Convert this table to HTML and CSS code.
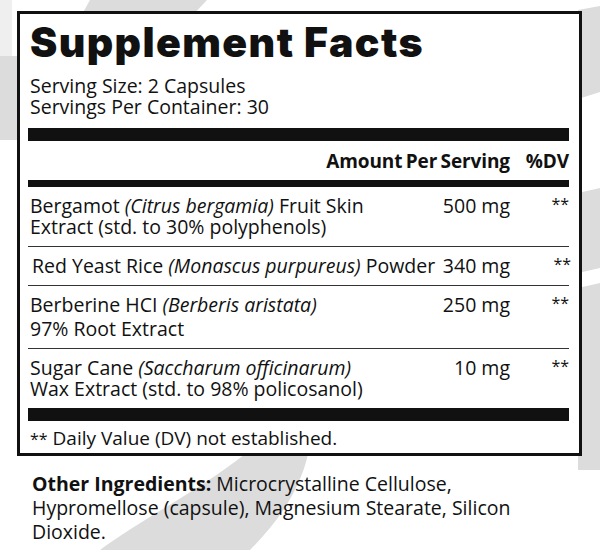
FILE: index.html
```html
<!DOCTYPE html>
<html lang="en">
<head>
<meta charset="utf-8">
<title>Supplement Facts</title>
<link rel="stylesheet" href="styles.css">
</head>
<body>
<svg class="bg" width="600" height="550" viewBox="0 0 600 550" aria-hidden="true">
  <rect x="0" y="0" width="12" height="56" fill="#efefef"/>
  <rect x="0" y="56" width="22" height="84" fill="#dcdcdc"/>
  <polygon points="90,0 207,0 190,18 80,18" fill="#dcdcdc"/>
  <polygon points="578,10 600,6 600,92 578,99" fill="#dcdcdc"/>
  <polygon points="578,193 600,188 600,268 578,273" fill="#dcdcdc"/>
  <polygon points="578,288 600,283 600,470 578,470" fill="#dcdcdc"/>
  <path d="M245,454 L308,454 C300,490 278,522 250,550 L100,550 C140,520 200,490 245,454 Z" fill="#dcdcdc"/>
</svg>

<div class="panel">
  <h1 class="title">Supplement Facts</h1>
  <div class="serving">
    <div>Serving Size: 2 Capsules</div>
    <div>Servings Per Container: 30</div>
  </div>
  <div class="bar bar-thick"></div>
  <div class="head">
    <span></span>
    <span class="amt">Amount Per Serving</span>
    <span class="dv-head">%DV</span>
  </div>
  <div class="bar bar-mid"></div>

  <div class="row">
    <div class="name">
      <div>Bergamot <i>(Citrus bergamia)</i> Fruit Skin</div>
      <div>Extract (std. to 30% polyphenols)</div>
    </div>
    <div class="amt">500 mg</div>
    <div class="dv">**</div>
  </div>

  <div class="row">
    <div class="name name-indent">
      <div>Red Yeast Rice <i>(Monascus purpureus)</i> Powder</div>
    </div>
    <div class="amt">340 mg</div>
    <div class="dv dv-shift">**</div>
  </div>

  <div class="row">
    <div class="name">
      <div>Berberine HCI <i>(Berberis aristata)</i></div>
      <div class="loose">97% Root Extract</div>
    </div>
    <div class="amt">250 mg</div>
    <div class="dv">**</div>
  </div>

  <div class="row row-last">
    <div class="name">
      <div>Sugar Cane <i>(Saccharum officinarum)</i></div>
      <div>Wax Extract (std. to 98% policosanol)</div>
    </div>
    <div class="amt">10 mg</div>
    <div class="dv">**</div>
  </div>

  <div class="bar bar-thick"></div>
  <div class="foot"><span class="stars">**</span> Daily Value (DV) not established.</div>
</div>

<p class="other"><b>Other Ingredients:</b> Microcrystalline Cellulose,<br>Hypromellose (capsule), Magnesium Stearate, Silicon<br>Dioxide.</p>
</body>
</html>
```

FILE: styles.css
```css
html, body {
  margin: 0;
  padding: 0;
}

body {
  width: 600px;
  height: 550px;
  position: relative;
  overflow: hidden;
  background: #ffffff;
  color: #111111;
  font-family: "Open Sans", Lato, sans-serif;
}

.bg {
  position: absolute;
  left: 0;
  top: 0;
  z-index: 0;
}

.panel {
  position: relative;
  z-index: 1;
  box-sizing: border-box;
  width: 565px;
  margin: 11px 0 0 17px;
  border: 3px solid #111111;
  background: #ffffff;
  padding: 4px 10px 3px 8px;
}

.title {
  margin: 0;
  padding-left: 2px;
  font-family: Inter, "Open Sans", sans-serif;
  font-weight: 900;
  font-size: 41px;
  line-height: 48px;
  letter-spacing: 1.4px;
}

.serving {
  margin-top: 9px;
  padding-left: 2px;
  font-size: 19.5px;
  line-height: 21px;
}

.bar {
  background: #111111;
}

.bar-thick {
  height: 13px;
  margin-top: 11px;
}

.bar-mid {
  height: 7px;
}

.head,
.row {
  display: grid;
  grid-template-columns: 1fr auto 59px;
  font-size: 19.5px;
  line-height: 21px;
}

.head {
  font-weight: 700;
  font-size: 19px;
  word-spacing: -1.5px;
  letter-spacing: -0.1px;
  padding: 10px 0 8px;
}

.dv-head {
  text-align: right;
}

.row {
  padding: 8px 0 9px;
  border-bottom: 1px solid #333333;
}

.row-last {
  border-bottom: none;
}

.row + .bar-thick {
  margin-top: 0;
}

.name {
  padding-left: 2px;
  white-space: nowrap;
}

.name-indent {
  padding-left: 4px;
}

.loose {
  margin-top: 3px;
}

.amt {
  text-align: right;
  white-space: nowrap;
}

.dv {
  text-align: right;
  font-size: 16px;
  line-height: 19px;
}

.dv-shift {
  margin-right: -2px;
}

.foot {
  padding: 7px 0 0 2px;
  font-size: 19px;
  line-height: 21px;
}

.stars {
  font-size: 16px;
}

.other {
  position: relative;
  z-index: 1;
  margin: 16px 0 0 32px;
  font-size: 19.5px;
  line-height: 24px;
}
```
